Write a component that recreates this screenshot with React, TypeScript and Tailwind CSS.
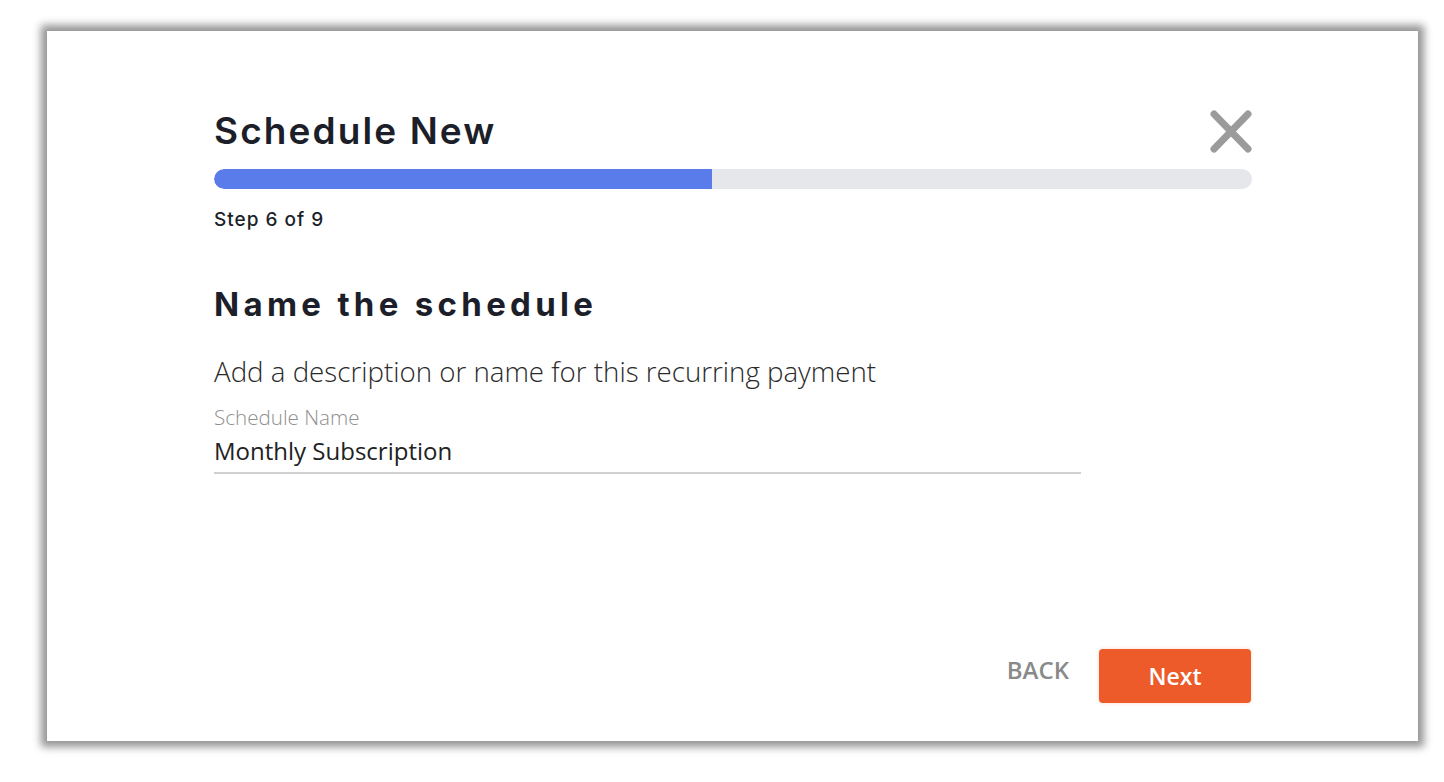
import React from "react";

export default function App() {
  return (
    <div className="w-[1444px] h-[782px] bg-white pt-[31px] pl-[47px] overflow-hidden">
      <div className="w-[1371px] h-[710px] bg-white shadow-[0_0_8px_6px_rgba(0,0,0,0.42)] flex flex-col pl-[167px] pr-[166px] pt-[78px] pb-[38px]">
        <div className="flex items-center justify-between h-[44px]">
          <h1
            className="text-[37px] leading-[44px] font-semibold text-[#1c1f2a] tracking-[2.1px]"
            style={{ fontFamily: "Inter, 'Noto Sans', sans-serif" }}
          >
            Schedule New
          </h1>
          <button className="w-[42px] h-[43px] flex items-center justify-center" aria-label="Close">
            <svg width="42" height="43" viewBox="0 0 42 43">
              <line x1="4" y1="4" x2="38" y2="39" stroke="#9b9b9b" strokeWidth="7" strokeLinecap="round" />
              <line x1="38" y1="4" x2="4" y2="39" stroke="#9b9b9b" strokeWidth="7" strokeLinecap="round" />
            </svg>
          </button>
        </div>

        <div className="mt-[16px] h-[20px] w-full rounded-full bg-[#e6e7ea] overflow-hidden flex">
          <div className="h-full w-[498px] bg-[#5a7bea] rounded-l-full" />
        </div>

        <div
          className="mt-[19px] text-[19px] leading-[24px] font-medium text-[#1c1f2a] tracking-[1px]"
          style={{ fontFamily: "Inter, 'Noto Sans', sans-serif" }}
        >
          Step 6 of 9
        </div>

        <h2
          className="mt-[52px] text-[33px] leading-[40px] font-bold text-[#1c1f2a] tracking-[4.3px]"
          style={{ fontFamily: "Inter, 'Noto Sans', sans-serif" }}
        >
          Name the schedule
        </h2>

        <p
          className="mt-[29px] text-[27.7px] leading-[36px] font-light text-[#2a2a2a]"
          style={{ fontFamily: "'Open Sans', sans-serif" }}
        >
          Add a description or name for this recurring payment
        </p>

        <div className="mt-[15px] w-[867px] border-b-2 border-[#d0d0d0] pb-[6px]" style={{ fontFamily: "'Open Sans', sans-serif" }}>
          <div className="text-[20.6px] leading-[26px] font-light text-[#8f8f8f]">Schedule Name</div>
          <div className="mt-[6px] text-[24px] leading-[30px] font-normal text-[#222222]">Monthly Subscription</div>
        </div>

        <div className="mt-auto flex items-center justify-end gap-[30px]" style={{ fontFamily: "'Open Sans', sans-serif" }}>
          <button className="text-[24px] leading-[32px] font-semibold text-[#8a8a8a] -mt-[12px]">BACK</button>
          <button className="w-[152px] h-[54px] rounded-[4px] bg-[#ec5b29] text-white text-[23px] font-semibold shadow-[0_0_3px_1px_rgba(236,91,41,0.15)] mr-[1px]">
            Next
          </button>
        </div>
      </div>
    </div>
  );
}
